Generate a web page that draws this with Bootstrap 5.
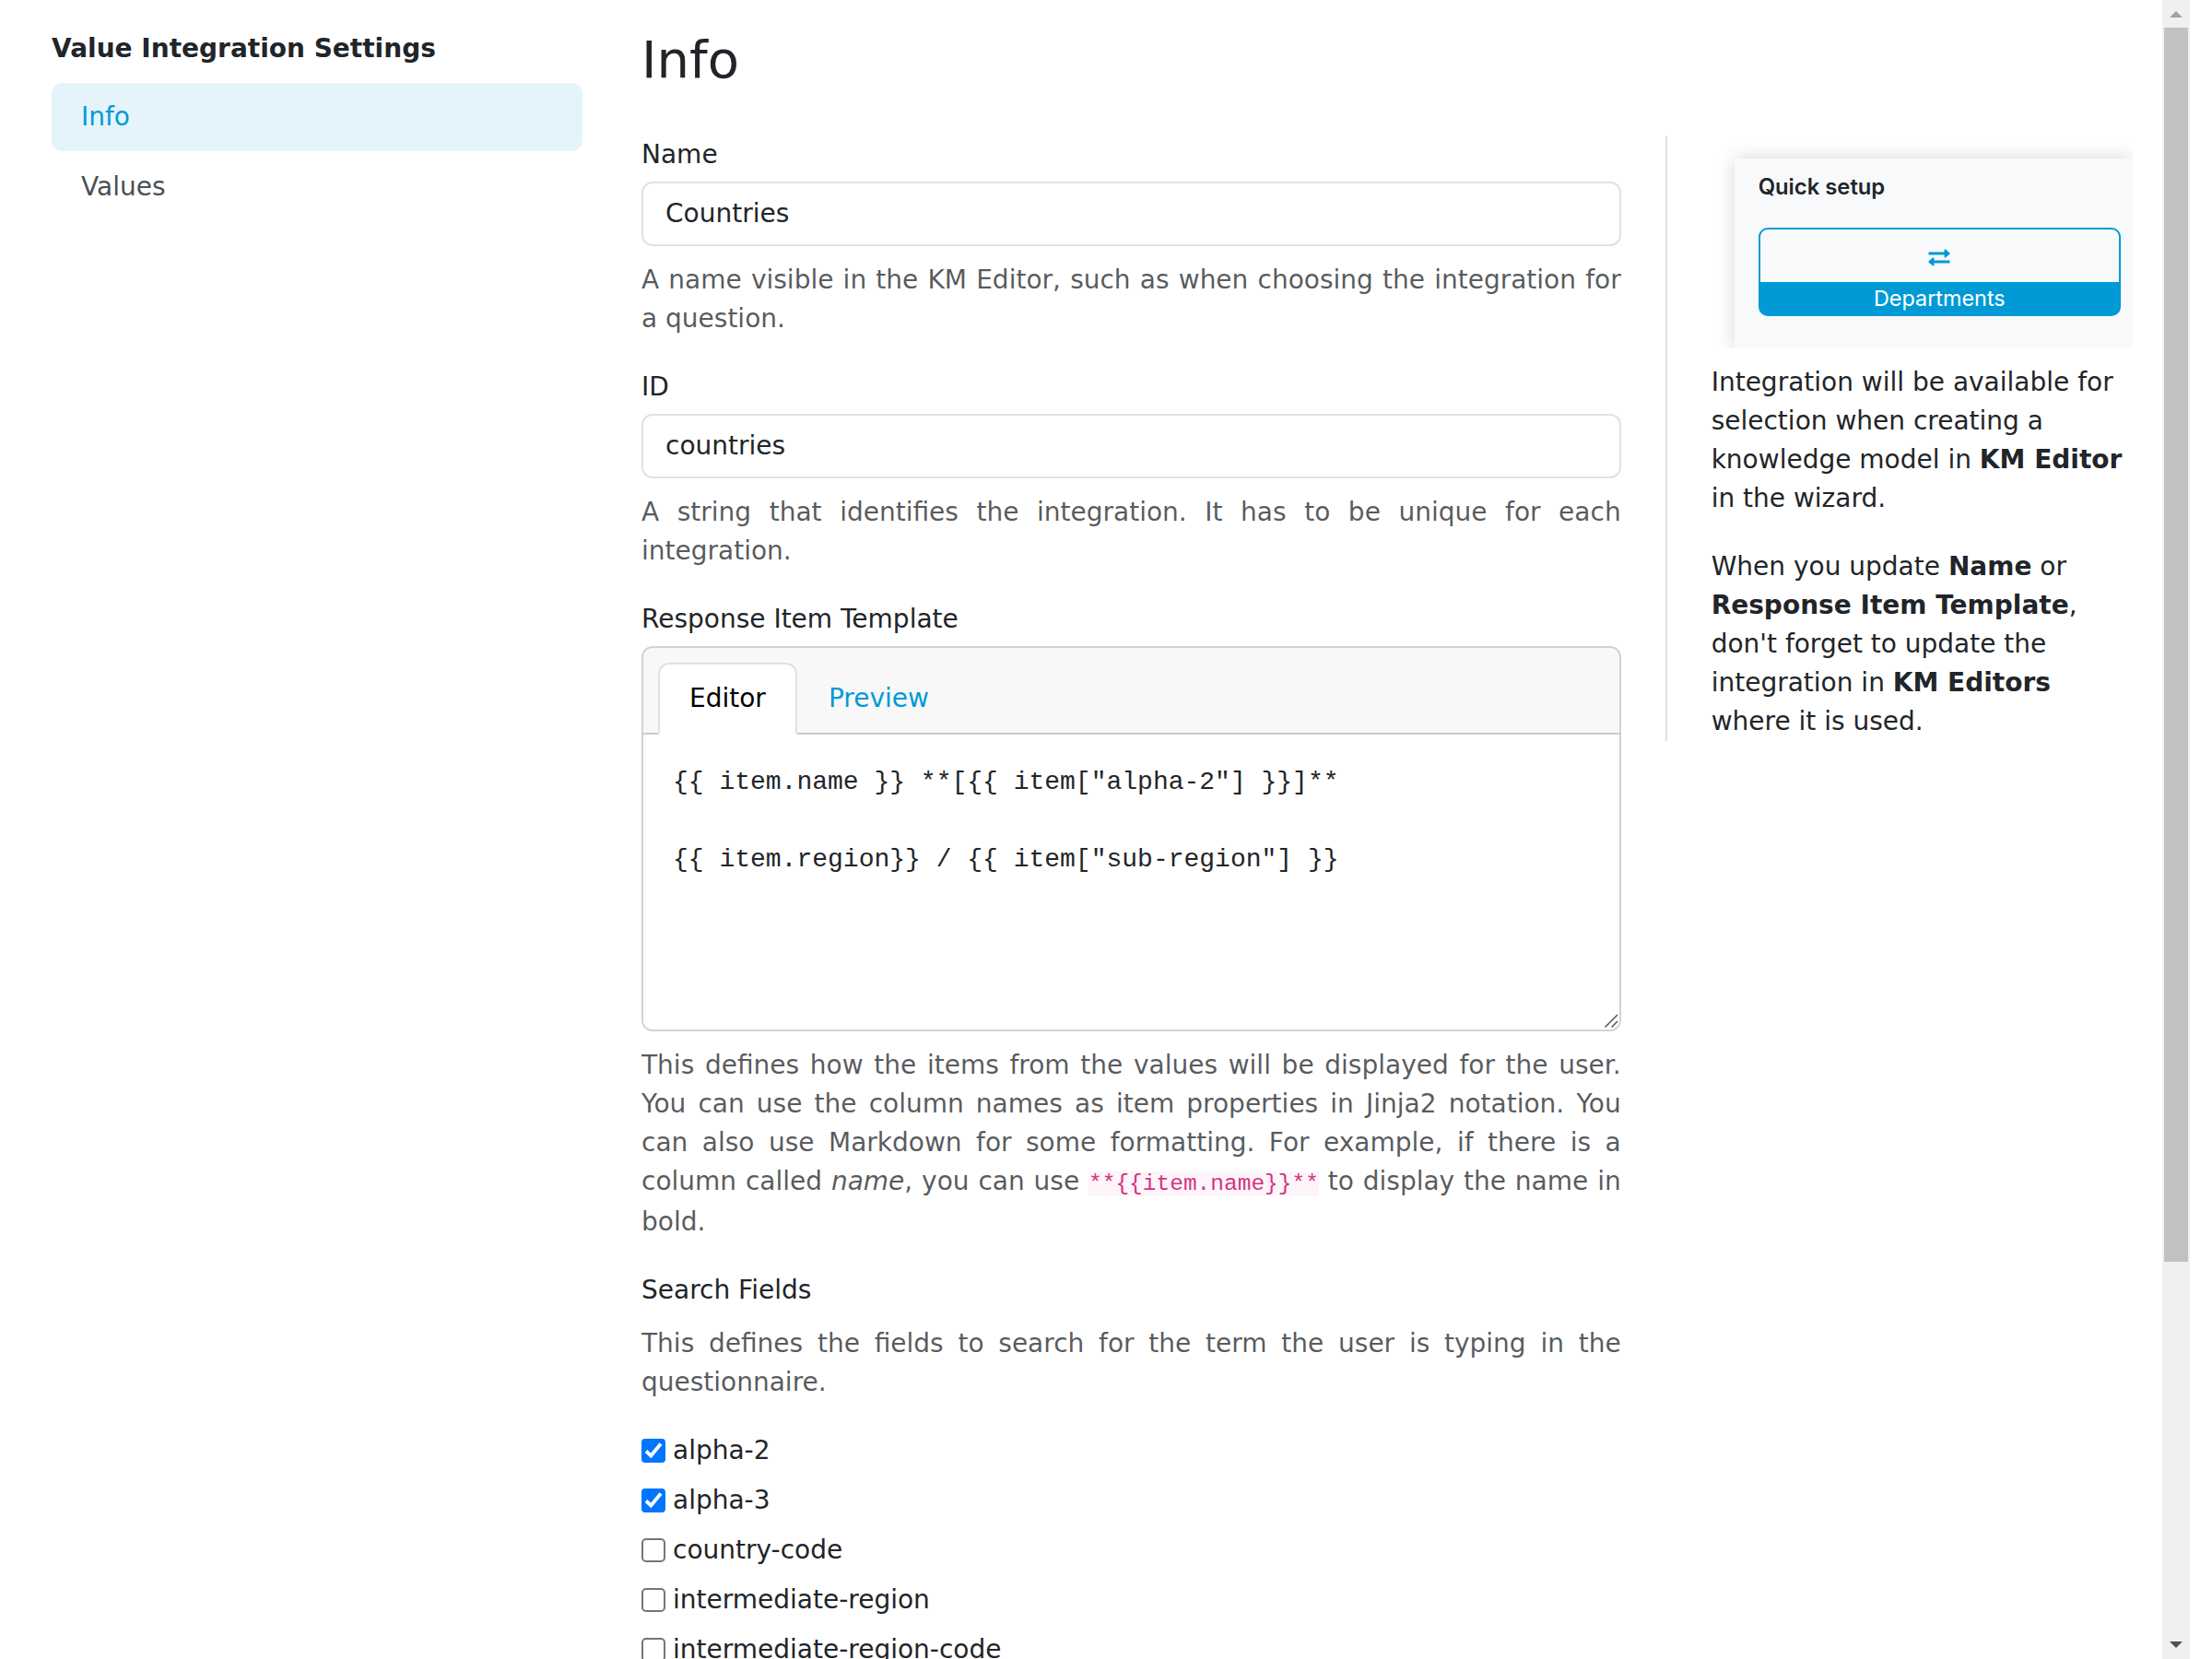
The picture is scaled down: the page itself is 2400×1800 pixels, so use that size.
<!DOCTYPE html>
<html lang="en">
<head>
<meta charset="utf-8">
<meta name="viewport" content="width=device-width, initial-scale=1">
<title>Value Integration Settings</title>
<link href="https://cdn.jsdelivr.net/npm/bootstrap@5.3.0/dist/css/bootstrap.min.css" rel="stylesheet">
<style>
  html { font-size: 32px; }
  body {
    --bs-border-width: 2px;
    --bs-border-radius: 12px;
    --bs-body-color: #212529;
    --brand: #019ad6;
    font-family: "DejaVu Sans", sans-serif;
    font-size: 28px;
    line-height: 1.5;
  }
  .app-frame { height: 1800px; padding: 0 24px; }
  .side-panel { width: 640px; flex: none; padding: 32px; }
  .side-title { margin-bottom: 16px; }
  .side-panel .nav { gap: 2px; --bs-nav-link-font-size: 28px; --bs-nav-link-color: #495057; --bs-nav-pills-link-active-bg: #e5f4fb; --bs-nav-pills-link-active-color: var(--brand); --bs-nav-pills-border-radius: 12px; }
  .main-panel { min-width: 0; padding: 31px 32px 0; }
  h2 { font-size: 56px; line-height: 67px; margin-bottom: 49px; }
  .form-label { margin-bottom: 8px; display: block; }
  .form-control { font-size: 28px; border: 2px solid #dee2e6; border-radius: 12px; padding: 12px 24px; line-height: 1.5; }
  .help { margin: 16px 0 0; color: rgba(33,37,41,.75); text-align: justify; }
  .help code { font-size: .875em; line-height: 38.5px; font-family: "Liberation Mono", monospace; background: rgba(214,51,132,.05); color: #d63384; }
  .field { margin-bottom: 32px; }
  .template-card { --bs-card-border-width: 2px; --bs-card-border-radius: 12px; --bs-card-inner-border-radius: 10px; height: 418px; }
  .template-card .nav { --bs-nav-tabs-border-width: 2px; --bs-nav-tabs-border-radius: 12px; --bs-nav-link-font-size: 28px; --bs-nav-link-color: var(--brand); --bs-nav-tabs-link-active-color: #000; }
  .template-card textarea { font-family: "Liberation Mono", monospace; padding: 31px 32px; border: 0; resize: none; overflow: hidden; border-radius: 0 0 10px 10px; }
  .grip { right: 1px; bottom: 2px; }
  .check-row { gap: 8px; margin-bottom: 12px; }
  .check-row input { appearance: none; width: 26px; height: 26px; margin: 0; border: 2px solid #767676; border-radius: 5px; background: #fff; grid-area: 1/1; }
  .check-row input:checked { border-color: #0075ff; background: #0075ff; border-radius: 4px; }
  .tick { width: 26px; height: 26px; grid-area: 1/1; z-index: 1; pointer-events: none; }
  .hint { border-left: 2px solid #dee2e6; padding-left: 48px; }
  .hint p { margin-bottom: 32px; }
  .hint p:last-child { margin-bottom: 0; }
  .shot { height: 231px; margin-bottom: 16px; padding: 25px 0 0 25px; overflow: hidden; font-family: Inter, sans-serif; }
  .shot-panel { height: 206px; background: #f8f9fb; box-shadow: 0 0 20px rgba(0,0,0,.16); padding: 16px 13px 0 26px; }
  .shot-title { font-size: 23.8px; font-weight: 600; line-height: 30px; margin-bottom: 29px; color: #212529; }
  .shot-tile { height: 96px; border: 2px solid var(--brand); border-radius: 10px; background: linear-gradient(var(--brand), var(--brand)) 0 100% / 100% 35px no-repeat; }
  .shot-icon { padding-top: 5px; }
  .shot-label { height: 35px; line-height: 36px; font-size: 23.4px; color: #fff; }
  .scroll-track { width: 30px; flex: none; background: #f0f0f0; }
  .scroll-thumb { width: 26px; height: 1339px; background: #c1c1c1; }
</style>
</head>
<body class="overflow-hidden">
<div class="app-frame d-flex overflow-hidden">
  <aside class="side-panel">
    <div class="side-title fw-bold">Value Integration Settings</div>
    <nav class="nav nav-pills flex-column">
      <a class="nav-link active" href="#">Info</a>
      <a class="nav-link" href="#">Values</a>
    </nav>
  </aside>

  <main class="main-panel flex-grow-1">
    <h2 class="fw-normal">Info</h2>
    <div class="row align-items-start">
      <div class="col-8">
        <div class="field">
          <label class="form-label" for="name">Name</label>
          <input class="form-control" id="name" value="Countries">
          <p class="help">A name visible in the KM Editor, such as when choosing the integration for a question.</p>
        </div>
        <div class="field">
          <label class="form-label" for="id">ID</label>
          <input class="form-control" id="id" value="countries">
          <p class="help">A string that identifies the integration. It has to be unique for each integration.</p>
        </div>
        <div class="field">
          <label class="form-label" for="tpl">Response Item Template</label>
          <div class="card template-card">
            <div class="card-header">
              <ul class="nav nav-tabs card-header-tabs">
                <li class="nav-item"><a class="nav-link active" href="#">Editor</a></li>
                <li class="nav-item"><a class="nav-link" href="#">Preview</a></li>
              </ul>
            </div>
            <textarea class="form-control flex-grow-1" id="tpl" spellcheck="false">{{ item.name }} **[{{ item["alpha-2"] }}]**

{{ item.region}} / {{ item["sub-region"] }}</textarea>
            <svg class="grip position-absolute" width="15" height="15" viewBox="0 0 15 15" fill="none" stroke="#555" stroke-width="1.500"><path d="M.5 14.500L14 1M7.500 14.500L14 8"/></svg>
          </div>
          <p class="help">This defines how the items from the values will be displayed for the user. You can use the column names as item properties in Jinja2 notation. You can also use Markdown for some formatting. For example, if there is a column called <em>name</em>, you can use <code>**{{item.name}}**</code> to display the name in bold.</p>
        </div>
        <div class="field">
          <div>Search Fields</div>
          <p class="help">This defines the fields to search for the term the user is typing in the questionnaire.</p>
        </div>
        <label class="check-row d-flex align-items-center"><span class="d-grid"><input type="checkbox" checked><svg class="tick" viewBox="0 0 26 26"><path d="M5 13.500L10.300 18.500L21 5.500" fill="none" stroke="#fff" stroke-width="3.800"/></svg></span>alpha-2</label>
        <label class="check-row d-flex align-items-center"><span class="d-grid"><input type="checkbox" checked><svg class="tick" viewBox="0 0 26 26"><path d="M5 13.500L10.300 18.500L21 5.500" fill="none" stroke="#fff" stroke-width="3.800"/></svg></span>alpha-3</label>
        <label class="check-row d-flex align-items-center"><span class="d-grid"><input type="checkbox"></span>country-code</label>
        <label class="check-row d-flex align-items-center"><span class="d-grid"><input type="checkbox"></span>intermediate-region</label>
        <label class="check-row d-flex align-items-center"><span class="d-grid"><input type="checkbox"></span>intermediate-region-code</label>
      </div>

      <div class="col-4">
        <div class="hint">
          <div class="shot">
            <div class="shot-panel">
              <div class="shot-title">Quick setup</div>
              <div class="shot-tile d-flex flex-column">
                <div class="shot-icon flex-grow-1 d-flex align-items-center justify-content-center">
                  <svg width="24" height="20" viewBox="0 0 24 20" fill="#019ad6"><path d="M1 3.400H17.600V1Q17.600-.4 18.800.6L23.300 4.300Q24 5 23.300 5.700L18.800 9.400Q17.600 10.400 17.600 9V6.600H1Q.5 6.600.5 6V4Q.5 3.400 1 3.400zM23 12.400H6.400V10Q6.400 8.600 5.200 9.600L.7 13.300Q0 14 .7 14.700L5.200 18.400Q6.400 19.400 6.400 18V15.600H23Q23.500 15.600 23.500 15V13Q23.500 12.400 23 12.400z"/></svg>
                </div>
                <div class="shot-label text-center">Departments</div>
              </div>
            </div>
          </div>
          <p>Integration will be available for selection when creating a knowledge model in <strong>KM Editor</strong> in the wizard.</p>
          <p>When you update <strong>Name</strong> or <strong>Response Item Template</strong>, don't forget to update the integration in <strong>KM Editors</strong> where it is used.</p>
        </div>
      </div>
    </div>
  </main>

  <div class="scroll-track d-flex flex-column align-items-center justify-content-between">
    <svg width="30" height="30" viewBox="0 0 30 30"><path d="M8 19L15 12L22 19z" fill="#a3a3a3"/></svg>
    <div class="scroll-thumb"></div>
    <svg class="mt-auto" width="30" height="30" viewBox="0 0 30 30"><path d="M8 11H22L15 18z" fill="#505050"/></svg>
  </div>
</div>
<script src="https://cdn.jsdelivr.net/npm/bootstrap@5.3.0/dist/js/bootstrap.bundle.min.js"></script>
</body>
</html>
